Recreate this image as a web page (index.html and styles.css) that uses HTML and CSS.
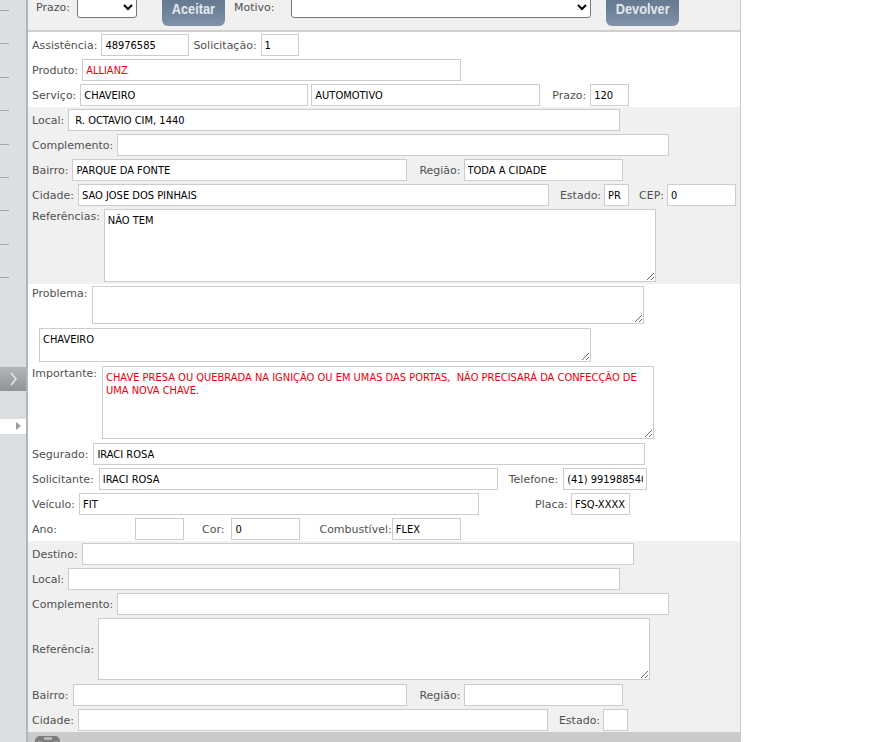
FILE: index.html
```html
<!DOCTYPE html>
<html lang="pt-BR">
<head>
<meta charset="utf-8">
<title>Serviço</title>
<link rel="stylesheet" href="styles.css">
</head>
<body>
<div class="page">
  <aside class="sidebar">
    <ul class="menu">
      <li></li><li></li><li></li><li></li><li></li><li></li><li></li><li></li><li></li>
    </ul>
    <div class="toggle">
      <svg width="26" height="24" viewBox="0 0 26 24"><polyline points="11,6 16,12 11,18" fill="none" stroke="#e4e7ea" stroke-width="1.6"/></svg>
    </div>
    <div class="strip"><span class="tri"></span></div>
  </aside>

  <main class="panel">
    <div class="toolbar">
      <span class="tlabel">Prazo:</span>
      <select class="sel sel-prazo"><option></option></select>
      <button class="btn btn-aceitar"><span class="btn-text">Aceitar</span></button>
      <span class="tlabel lbl-motivo">Motivo:</span>
      <select class="sel sel-motivo"><option></option></select>
      <button class="btn btn-devolver"><span class="btn-text">Devolver</span></button>
    </div>

    <section class="sec white">
      <div class="row">
        <label class="lbl">Assistência:</label><input class="in w88" value="48976585">
        <label class="lbl ml4">Solicitação:</label><input class="in w38" value="1">
      </div>
      <div class="row">
        <label class="lbl">Produto:</label><input class="in w379 red" value="ALLIANZ">
      </div>
      <div class="row">
        <label class="lbl">Serviço:</label><input class="in w228" value="CHAVEIRO"><input class="in w229 ml3" value="AUTOMOTIVO">
        <label class="lbl ml12">Prazo:</label><input class="in w39" value="120">
      </div>
    </section>

    <section class="sec gray">
      <div class="row">
        <label class="lbl">Local:</label><input class="in w552" value=" R. OCTAVIO CIM, 1440">
      </div>
      <div class="row">
        <label class="lbl">Complemento:</label><input class="in w552" value="">
      </div>
      <div class="row">
        <label class="lbl">Bairro:</label><input class="in w335" value="PARQUE DA FONTE">
        <label class="lbl ml12 gap3">Região:</label><input class="in w159" value="TODA A CIDADE">
      </div>
      <div class="row">
        <label class="lbl">Cidade:</label><input class="in w471" value="SAO JOSE DOS PINHAIS">
        <label class="lbl ml11 gap3">Estado:</label><input class="in w25" value="PR">
        <label class="lbl ml10 gap3">CEP:</label><input class="in w69" value="0">
      </div>
      <div class="row ta">
        <label class="lbl">Referências:</label><textarea class="in w552 h73">NÃO TEM</textarea>
      </div>
    </section>

    <section class="sec white">
      <div class="row ta">
        <label class="lbl gap5">Problema:</label><textarea class="in w552 h38"></textarea>
      </div>
      <div class="row ta indent">
        <textarea class="in w552 h34">CHAVEIRO</textarea>
      </div>
      <div class="row ta">
        <label class="lbl gap5">Importante:</label><textarea class="in w552 h73 red">CHAVE PRESA OU QUEBRADA NA IGNIÇÃO OU EM UMAS DAS PORTAS,  NÃO PRECISARÁ DA CONFECÇÃO DE UMA NOVA CHAVE.</textarea>
      </div>
      <div class="row">
        <label class="lbl gap5">Segurado:</label><input class="in w552" value="IRACI ROSA">
      </div>
      <div class="row">
        <label class="lbl gap5">Solicitante:</label><input class="in w399" value="IRACI ROSA">
        <label class="lbl ml11 gap5">Telefone:</label><input class="in w84" value="(41) 991988540">
      </div>
      <div class="row">
        <label class="lbl">Veículo:</label><input class="in w400" value="FIT">
        <label class="lbl ml56 gap3">Placa:</label><input class="in w59" value="FSQ-XXXX">
      </div>
      <div class="row">
        <label class="lbl lbl-ano">Ano:</label><input class="in w49" value="">
        <label class="lbl ml18 gap7">Cor:</label><input class="in w69" value="0">
        <label class="lbl ml19 gap0">Combustível:</label><input class="in w69" value="FLEX">
      </div>
    </section>

    <section class="sec gray">
      <div class="row">
        <label class="lbl">Destino:</label><input class="in w552" value="">
      </div>
      <div class="row">
        <label class="lbl">Local:</label><input class="in w552" value="">
      </div>
      <div class="row">
        <label class="lbl">Complemento:</label><input class="in w552" value="">
      </div>
      <div class="row ta mid">
        <label class="lbl">Referência:</label><textarea class="in w552 h62"></textarea>
      </div>
      <div class="row">
        <label class="lbl gap5">Bairro:</label><input class="in w334" value="">
        <label class="lbl ml12 gap3">Região:</label><input class="in w159" value="">
      </div>
      <div class="row">
        <label class="lbl">Cidade:</label><input class="in w470" value="">
        <label class="lbl ml11 gap3">Estado:</label><input class="in w25" value="">
      </div>
    </section>

    <div class="footbar">
      <svg width="26" height="10" viewBox="0 0 26 10"><rect x="0" y="0" width="25" height="14" rx="5" fill="#7c7c7c"/><rect x="9" y="1" width="8" height="3" rx="1" fill="#b9b9b9"/><rect x="3" y="5" width="4" height="2" fill="#a0a0a0"/><rect x="19" y="5" width="4" height="2" fill="#a0a0a0"/></svg>
    </div>
  </main>
</div>
</body>
</html>
```

FILE: styles.css
```css
html, body {
  margin: 0;
  padding: 0;
  background: #ffffff;
}

body {
  font-family: "DejaVu Sans", Verdana, sans-serif;
  font-size: 11px;
  color: #505050;
  overflow: hidden;
}

.page {
  display: flex;
  align-items: flex-start;
}

/* ---------- sidebar ---------- */
.sidebar {
  width: 26px;
  min-height: 742px;
  background: #dcdfe2;
  border-right: 2px solid #b3b6b9;
  display: flex;
  flex-direction: column;
}

.menu {
  list-style: none;
  margin: 10px 0 0 0;
  padding: 0;
}

.menu li {
  height: 33.4px;
  box-sizing: border-box;
  width: 9px;
  border-top: 1px solid #a6a6a6;
}

.toggle {
  margin-top: 56px;
  height: 24px;
  background: linear-gradient(to bottom, #b1b5b9, #8f9499);
}

.toggle svg {
  display: block;
}

.strip {
  margin-top: 28px;
  height: 15px;
  background: #ffffff;
}

.tri {
  display: block;
  width: 0;
  height: 0;
  margin: 3px 0 0 16px;
  border-top: 4px solid transparent;
  border-bottom: 4px solid transparent;
  border-left: 5px solid #9a9a9a;
}

/* ---------- main panel ---------- */
.panel {
  width: 712px;
  border-right: 1px solid #c8c8c8;
  min-height: 742px;
  background: #ffffff;
}

.toolbar {
  height: 30px;
  background: #f0f0f0;
  border-bottom: 2px solid #cfcfcf;
  display: flex;
  align-items: flex-start;
  padding-left: 8px;
}

.tlabel {
  margin-top: 1px;
  line-height: 14px;
  color: #505050;
}

.sel {
  height: 22px;
  margin-top: -4px;
  box-sizing: border-box;
  background: #ffffff;
  border: 1px solid #767676;
  border-radius: 3px;
  font-size: 13px;
}

.sel-prazo {
  width: 60px;
  margin-left: 7px;
}

.sel-motivo {
  width: 300px;
  margin-left: 17px;
}

.btn {
  margin-top: -8px;
  height: 34px;
  padding: 0 0 1px 0;
  border: 0;
  border-radius: 6px;
  background: linear-gradient(to bottom, #5f7389 0%, #6e8299 55%, #8194a8 100%);
  color: #e2e8ee;
  font-family: "Liberation Sans", Arial, sans-serif;
  font-weight: bold;
  font-size: 15px;
  line-height: 16px;
  text-align: center;
  overflow: hidden;
}

.btn-text {
  display: inline-block;
  transform: scaleX(0.85);
}

.btn-aceitar {
  width: 63px;
  margin-left: 25px;
}

.lbl-motivo {
  margin-left: 9px;
}

.btn-devolver {
  width: 73px;
  margin-left: 15px;
}

/* ---------- sections ---------- */
.sec.white { background: #ffffff; }
.sec.gray { background: #f0f0f0; }

.row {
  display: flex;
  align-items: center;
  padding: 2px 0 1px 4px;
}

.row.ta {
  align-items: flex-start;
  padding-bottom: 2px;
}

.row.ta.mid {
  align-items: center;
}

.row.indent {
  padding-left: 11px;
}

.lbl {
  font-family: "DejaVu Sans", Verdana, sans-serif;
  font-size: 11px;
  line-height: 13px;
  color: #505050;
  margin-right: 4px;
  white-space: nowrap;
}

.row.ta .lbl {
  margin-top: 1px;
}

.row.ta.mid .lbl {
  margin-top: 0;
}

.lbl-ano { width: 99px; }
.lbl.gap0 { margin-right: 0; }
.lbl.gap3 { margin-right: 3px; }
.lbl.gap5 { margin-right: 5px; }
.lbl.gap7 { margin-right: 7px; }

.in {
  display: block;
  box-sizing: border-box;
  height: 22px;
  margin: 0;
  border: 1px solid #cccccc;
  border-radius: 0;
  padding: 0 3px;
  background: #ffffff;
  font-family: "DejaVu Sans Condensed", "DejaVu Sans", sans-serif;
  font-size: 11px;
  color: #000000;
  outline: none;
}

textarea.in {
  padding: 4px 3px;
  line-height: 13px;
  resize: both;
}

.red { color: #e8000b; }

.w25 { width: 25px; }
.w38 { width: 38px; }
.w39 { width: 39px; }
.w49 { width: 49px; }
.w59 { width: 59px; }
.w69 { width: 69px; }
.w84 { width: 84px; }
.w88 { width: 88px; }
.w159 { width: 159px; }
.w228 { width: 228px; }
.w229 { width: 229px; }
.w334 { width: 334px; }
.w335 { width: 335px; }
.w379 { width: 379px; }
.w399 { width: 399px; }
.w400 { width: 400px; }
.w470 { width: 470px; }
.w471 { width: 471px; }
.w552 { width: 552px; }

.h34 { height: 34px; }
.h38 { height: 38px; }
.h62 { height: 62px; }
.h73 { height: 73px; }

.ml3 { margin-left: 3px; }
.ml4 { margin-left: 4px; }
.ml10 { margin-left: 10px; }
.ml11 { margin-left: 11px; }
.ml12 { margin-left: 12px; }
.ml18 { margin-left: 18px; }
.ml19 { margin-left: 19px; }
.ml56 { margin-left: 56px; }

.footbar {
  height: 20px;
  background: #cacaca;
  padding: 4px 0 0 7px;
  box-sizing: border-box;
}

.footbar svg {
  display: block;
}
```
